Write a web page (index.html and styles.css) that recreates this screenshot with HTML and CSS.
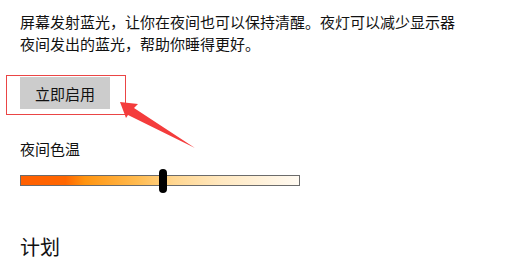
FILE: index.html
```html
<!DOCTYPE html>
<html lang="zh-CN">
<head>
<meta charset="utf-8">
<link rel="stylesheet" href="styles.css">
</head>
<body>
<div class="page">
  <p class="desc">屏幕发射蓝光，让你在夜间也可以保持清醒。夜灯可以减少显示器<br>夜间发出的蓝光，帮助你睡得更好。</p>
  <div class="action">
    <button class="btn">立即启用</button>
    <div class="mark-box"></div>
    <svg class="mark-arrow" width="90" height="60" viewBox="0 0 90 60">
      <polygon points="10,12 28,14 24,18 85,58 18,25 16,28" fill="#f43c3c"/>
    </svg>
  </div>
  <div class="label">夜间色温</div>
  <div class="slider">
    <div class="track"></div>
    <div class="thumb"></div>
  </div>
  <h2 class="heading">计划</h2>
</div>
</body>
</html>
```
FILE: styles.css
```css
html, body {
  margin: 0;
  padding: 0;
  background: #ffffff;
}
body {
  font-family: "Noto Sans CJK SC", "Noto Sans", sans-serif;
  color: #111;
}
.page {
  padding-left: 20px;
  padding-top: 11px;
}
.desc {
  margin: 0;
  font-size: 15px;
  line-height: 22px;
}
.action {
  position: relative;
  margin-top: 22px;
  height: 32px;
}
.btn {
  display: block;
  width: 90px;
  height: 32px;
  border: 0;
  padding: 0;
  background: #cccccc;
  font-family: inherit;
  font-size: 15px;
  color: #111;
}
.mark-box {
  position: absolute;
  left: -14px;
  top: -2px;
  width: 118px;
  height: 38px;
  border: 1px solid #ea4545;
}
.mark-arrow {
  position: absolute;
  left: 90px;
  top: 13px;
}
.label {
  margin-top: 29px;
  font-size: 15px;
  line-height: 22px;
}
.slider {
  position: relative;
  margin-top: 15px;
  width: 280px;
  height: 11px;
}
.track {
  box-sizing: border-box;
  width: 280px;
  height: 11px;
  border: 1px solid #6b6b6b;
  background: linear-gradient(to right, #ff5f00 0%, #ff6600 16%, #ff9410 23%, #ffbb50 42%, #ffd690 55%, #ffe8c0 72%, #fffaf2 100%);
}
.thumb {
  position: absolute;
  left: 139px;
  top: -6px;
  width: 8px;
  height: 24px;
  border-radius: 4px;
  background: #000;
}
.heading {
  margin: 47px 0 0;
  font-size: 20px;
  line-height: 28px;
  font-weight: normal;
}
```
